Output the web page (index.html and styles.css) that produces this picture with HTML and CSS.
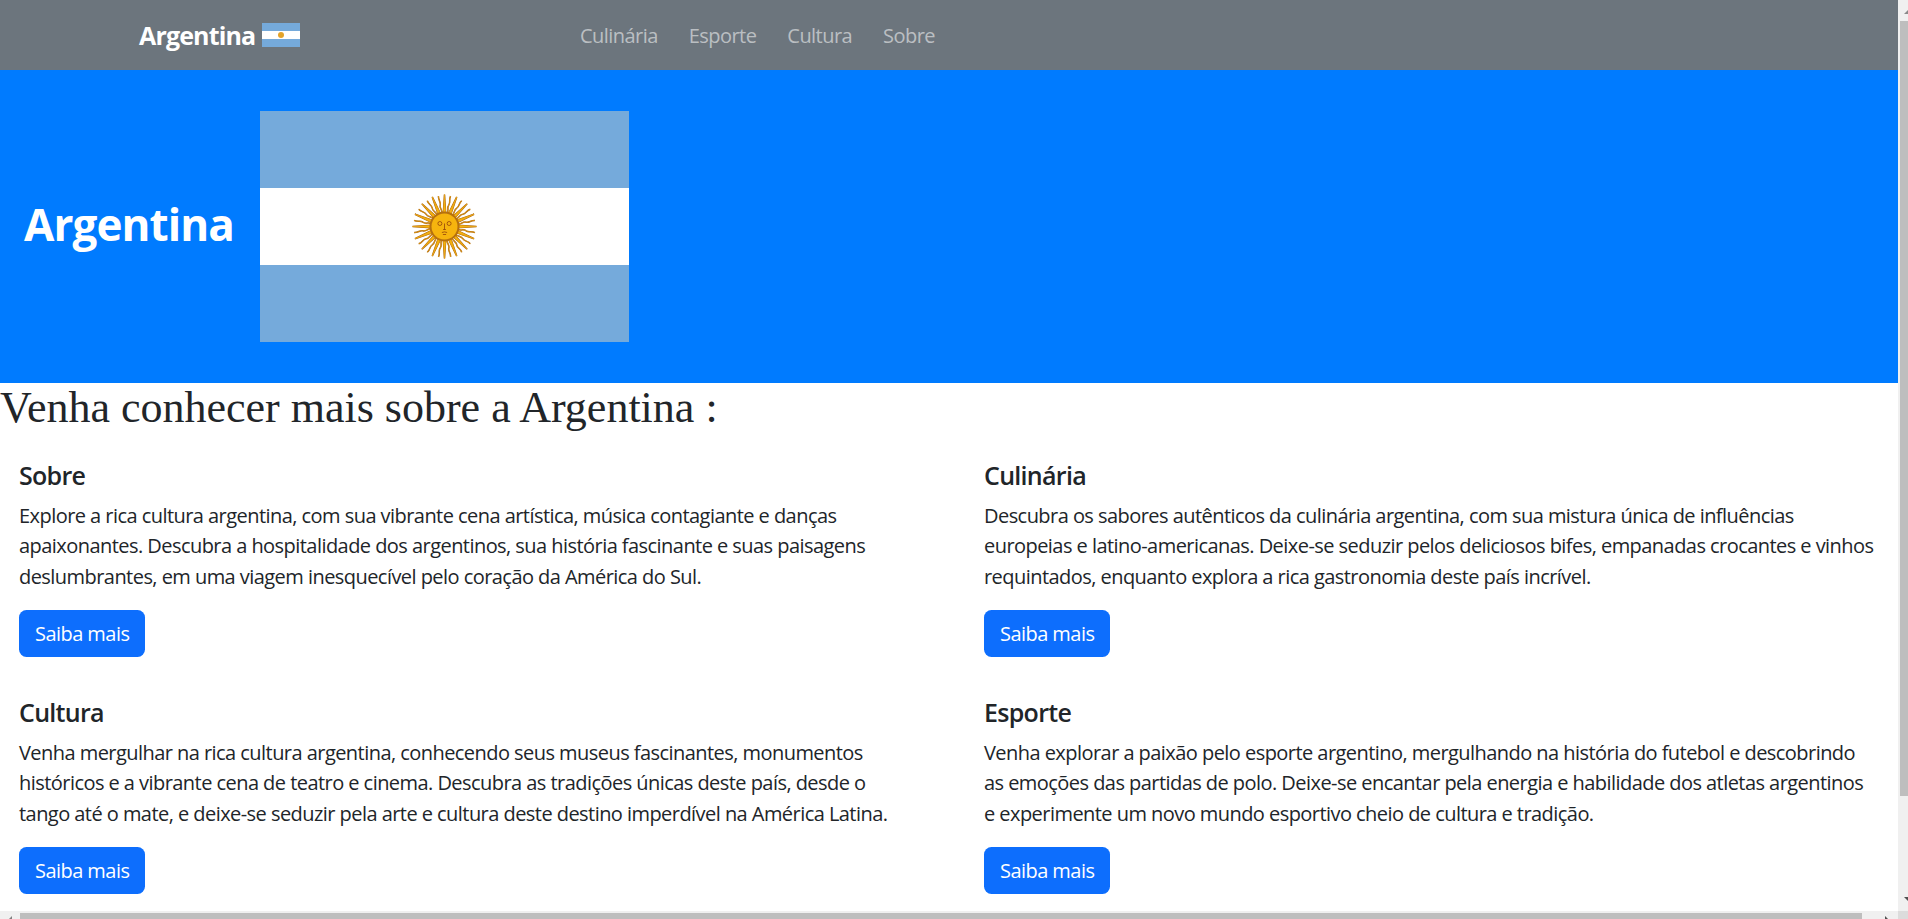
FILE: index.html
```html
<!DOCTYPE html>
<html lang="pt-BR">
<head>
<meta charset="utf-8">
<title>Argentina</title>
<link rel="stylesheet" href="styles.css">
</head>
<body>
<svg class="defs" width="0" height="0">
  <defs>
    <path id="ray-straight" d="M-1.2 -13 L0 -32 L1.2 -13 Z"/>
    <path id="ray-wavy" d="M0 -13 C1.8 -16 -1.8 -19 0 -22 C1.5 -25 -1.2 -27 0 -31" fill="none"/>
    <g id="sun-rays">
      <use href="#ray-straight" transform="rotate(0)"/>
      <use href="#ray-wavy" transform="rotate(11.25)"/>
      <use href="#ray-straight" transform="rotate(22.5)"/>
      <use href="#ray-wavy" transform="rotate(33.75)"/>
    </g>
    <g id="sun-quarter">
      <use href="#sun-rays"/>
      <use href="#sun-rays" transform="rotate(45)"/>
    </g>
    <g id="sun-all">
      <use href="#sun-quarter"/>
      <use href="#sun-quarter" transform="rotate(90)"/>
      <use href="#sun-quarter" transform="rotate(180)"/>
      <use href="#sun-quarter" transform="rotate(270)"/>
    </g>
  </defs>
</svg>
<div class="window">
  <div class="page">
    <nav class="navbar">
      <a class="brand" href="#">Argentina
        <svg class="brand-flag" viewBox="0 0 38 24">
          <rect width="38" height="24" fill="#75aadb"/>
          <rect y="8" width="38" height="8" fill="#fff"/>
          <circle cx="19" cy="12" r="3" fill="#e3a32a"/>
        </svg>
      </a>
      <ul class="nav-links">
        <li><a href="#">Culinária</a></li>
        <li><a href="#">Esporte</a></li>
        <li><a href="#">Cultura</a></li>
        <li><a href="#">Sobre</a></li>
      </ul>
    </nav>
    <header class="hero">
      <h1>Argentina</h1>
      <svg class="hero-flag" viewBox="0 0 369 231">
        <rect width="369" height="231" fill="#75aadb"/>
        <rect y="77" width="369" height="77" fill="#fff"/>
        <g transform="translate(184.5 115.5)">
          <use href="#sun-all" fill="#a8610a" stroke="#a8610a" stroke-width="1.5"/>
          <use href="#sun-all" fill="#f6b40e" stroke="#eda91a" stroke-width="0.6"/>
          <circle r="15" fill="#b5700f"/>
          <circle r="13" fill="#f6b40e"/>
          <g fill="none" stroke="#85340a" stroke-width="0.7">
            <circle cx="-4.6" cy="-3" r="2"/>
            <circle cx="4.6" cy="-3" r="2"/>
            <path d="M0 -3 V3 M-1.4 3 H1.4 M-2.6 6 Q0 4.8 2.6 6 M-1.6 8 H1.6"/>
          </g>
        </g>
      </svg>
    </header>
    <h2 class="intro">Venha conhecer mais sobre a Argentina :</h2>
    <section class="cards">
      <article class="card">
        <h5>Sobre</h5>
        <p>Explore a rica cultura argentina, com sua vibrante cena artística, música contagiante e danças apaixonantes. Descubra a hospitalidade dos argentinos, sua história fascinante e suas paisagens deslumbrantes, em uma viagem inesquecível pelo coração da América do Sul.</p>
        <a class="btn" href="#">Saiba mais</a>
      </article>
      <article class="card">
        <h5>Culinária</h5>
        <p>Descubra os sabores autênticos da culinária argentina, com sua mistura única de influências europeias e latino-americanas. Deixe-se seduzir pelos deliciosos bifes, empanadas crocantes e vinhos requintados, enquanto explora a rica gastronomia deste país incrível.</p>
        <a class="btn" href="#">Saiba mais</a>
      </article>
      <article class="card">
        <h5>Cultura</h5>
        <p>Venha mergulhar na rica cultura argentina, conhecendo seus museus fascinantes, monumentos históricos e a vibrante cena de teatro e cinema. Descubra as tradições únicas deste país, desde o tango até o mate, e deixe-se seduzir pela arte e cultura deste destino imperdível na América Latina.</p>
        <a class="btn" href="#">Saiba mais</a>
      </article>
      <article class="card">
        <h5>Esporte</h5>
        <p>Venha explorar a paixão pelo esporte argentino, mergulhando na história do futebol e descobrindo as emoções das partidas de polo. Deixe-se encantar pela energia e habilidade dos atletas argentinos e experimente um novo mundo esportivo cheio de cultura e tradição.</p>
        <a class="btn" href="#">Saiba mais</a>
      </article>
    </section>
  </div>
  <div class="scroll-v">
    <span class="arrow-up"></span>
    <span class="thumb-v"></span>
    <span class="arrow-down"></span>
  </div>
  <div class="scroll-h">
    <span class="arrow-left"></span>
    <span class="thumb-h"></span>
    <span class="arrow-right"></span>
  </div>
  <div class="scroll-corner"></div>
</div>
</body>
</html>
```

FILE: styles.css
```css
* {
  box-sizing: border-box;
}

html, body {
  margin: 0;
  height: 100%;
  overflow: hidden;
}

body {
  font-family: "Open Sans", "Noto Sans", Arial, sans-serif;
  font-size: 20px;
  line-height: 30.4px;
  letter-spacing: -0.55px;
  color: #212529;
  background-color: #fff;
}

a {
  text-decoration: none;
}

.defs {
  display: block;
  height: 0;
}

.window {
  display: grid;
  grid-template-columns: 1fr 10px;
  grid-template-rows: 1fr 8px;
  height: 919px;
}

.page {
  overflow: hidden;
}

/* navbar */
.navbar {
  display: flex;
  align-items: center;
  height: 70px;
  width: 1898px;
  padding-left: 139px;
  background-color: #6c757d;
}

.brand {
  display: flex;
  align-items: center;
  gap: 7px;
  width: 441px;
  font-size: 25px;
  font-weight: 700;
  letter-spacing: -0.85px;
  color: #fff;
}

.brand-flag {
  width: 38px;
  height: 24px;
}

.nav-links {
  display: flex;
  gap: 31px;
  margin: 0;
  padding: 3px 0 0;
  list-style: none;
}

.nav-links a {
  color: rgba(255,255,255,.55);
}

/* banner */
.hero {
  display: flex;
  align-items: center;
  gap: 26px;
  height: 313px;
  width: 1898px;
  padding-left: 24px;
  background-color: #007bff;
}

.hero h1 {
  margin: 0 0 5px;
  font-size: 44px;
  line-height: 58px;
  font-weight: 700;
  letter-spacing: -0.9px;
  color: #fff;
}

.hero-flag {
  width: 369px;
  height: 231px;
}

.intro {
  margin: 0;
  height: 53px;
  font-family: "Liberation Serif", Georgia, serif;
  font-size: 44px;
  line-height: 50px;
  font-weight: 400;
  letter-spacing: 0;
}

/* cards */
.cards {
  display: grid;
  grid-template-columns: 965px 965px;
  grid-auto-rows: 237px;
}

.card {
  padding: 24px 19px 0;
}

.card h5 {
  margin: 0 0 11px;
  font-size: 25px;
  line-height: 30px;
  font-weight: 600;
  letter-spacing: -0.7px;
}

.card p {
  width: 894px;
  margin: 0 0 18px;
}

.btn {
  display: inline-block;
  height: 47px;
  padding: 9px 16px 0;
  border-radius: 7.5px;
  color: #fff;
  background-color: #0d6efd;
}

/* scrollbars */
.scroll-v {
  display: flex;
  flex-direction: column;
  padding-left: 2px;
  background-color: #f0f0f0;
}

.thumb-v {
  flex: none;
  height: 775px;
  margin-top: 7px;
  background-color: #bebebe;
}

.arrow-up {
  flex: none;
  align-self: flex-end;
  width: 0;
  height: 0;
  margin-top: 10px;
  border-left: 4px solid transparent;
  border-bottom: 4px solid #8a8a8a;
}

.arrow-down {
  flex: none;
  align-self: flex-end;
  width: 0;
  height: 0;
  margin-top: 101px;
  border-left: 4px solid transparent;
  border-top: 4px solid #505050;
}

.scroll-h {
  display: flex;
  padding-top: 2px;
  background-color: #f0f0f0;
}

.thumb-h {
  flex: none;
  width: 1842px;
  margin-left: 8px;
  background-color: #bebebe;
}

.arrow-left {
  flex: none;
  align-self: flex-end;
  width: 0;
  height: 0;
  margin-left: 9px;
  border-left: 3px solid transparent;
  border-bottom: 3px solid #808080;
}

.arrow-right {
  flex: none;
  align-self: flex-end;
  width: 0;
  height: 0;
  margin-left: 23px;
  border-top: 3px solid transparent;
  border-left: 3px solid #505050;
}

.scroll-corner {
  background-color: #dcdcdc;
}
```
